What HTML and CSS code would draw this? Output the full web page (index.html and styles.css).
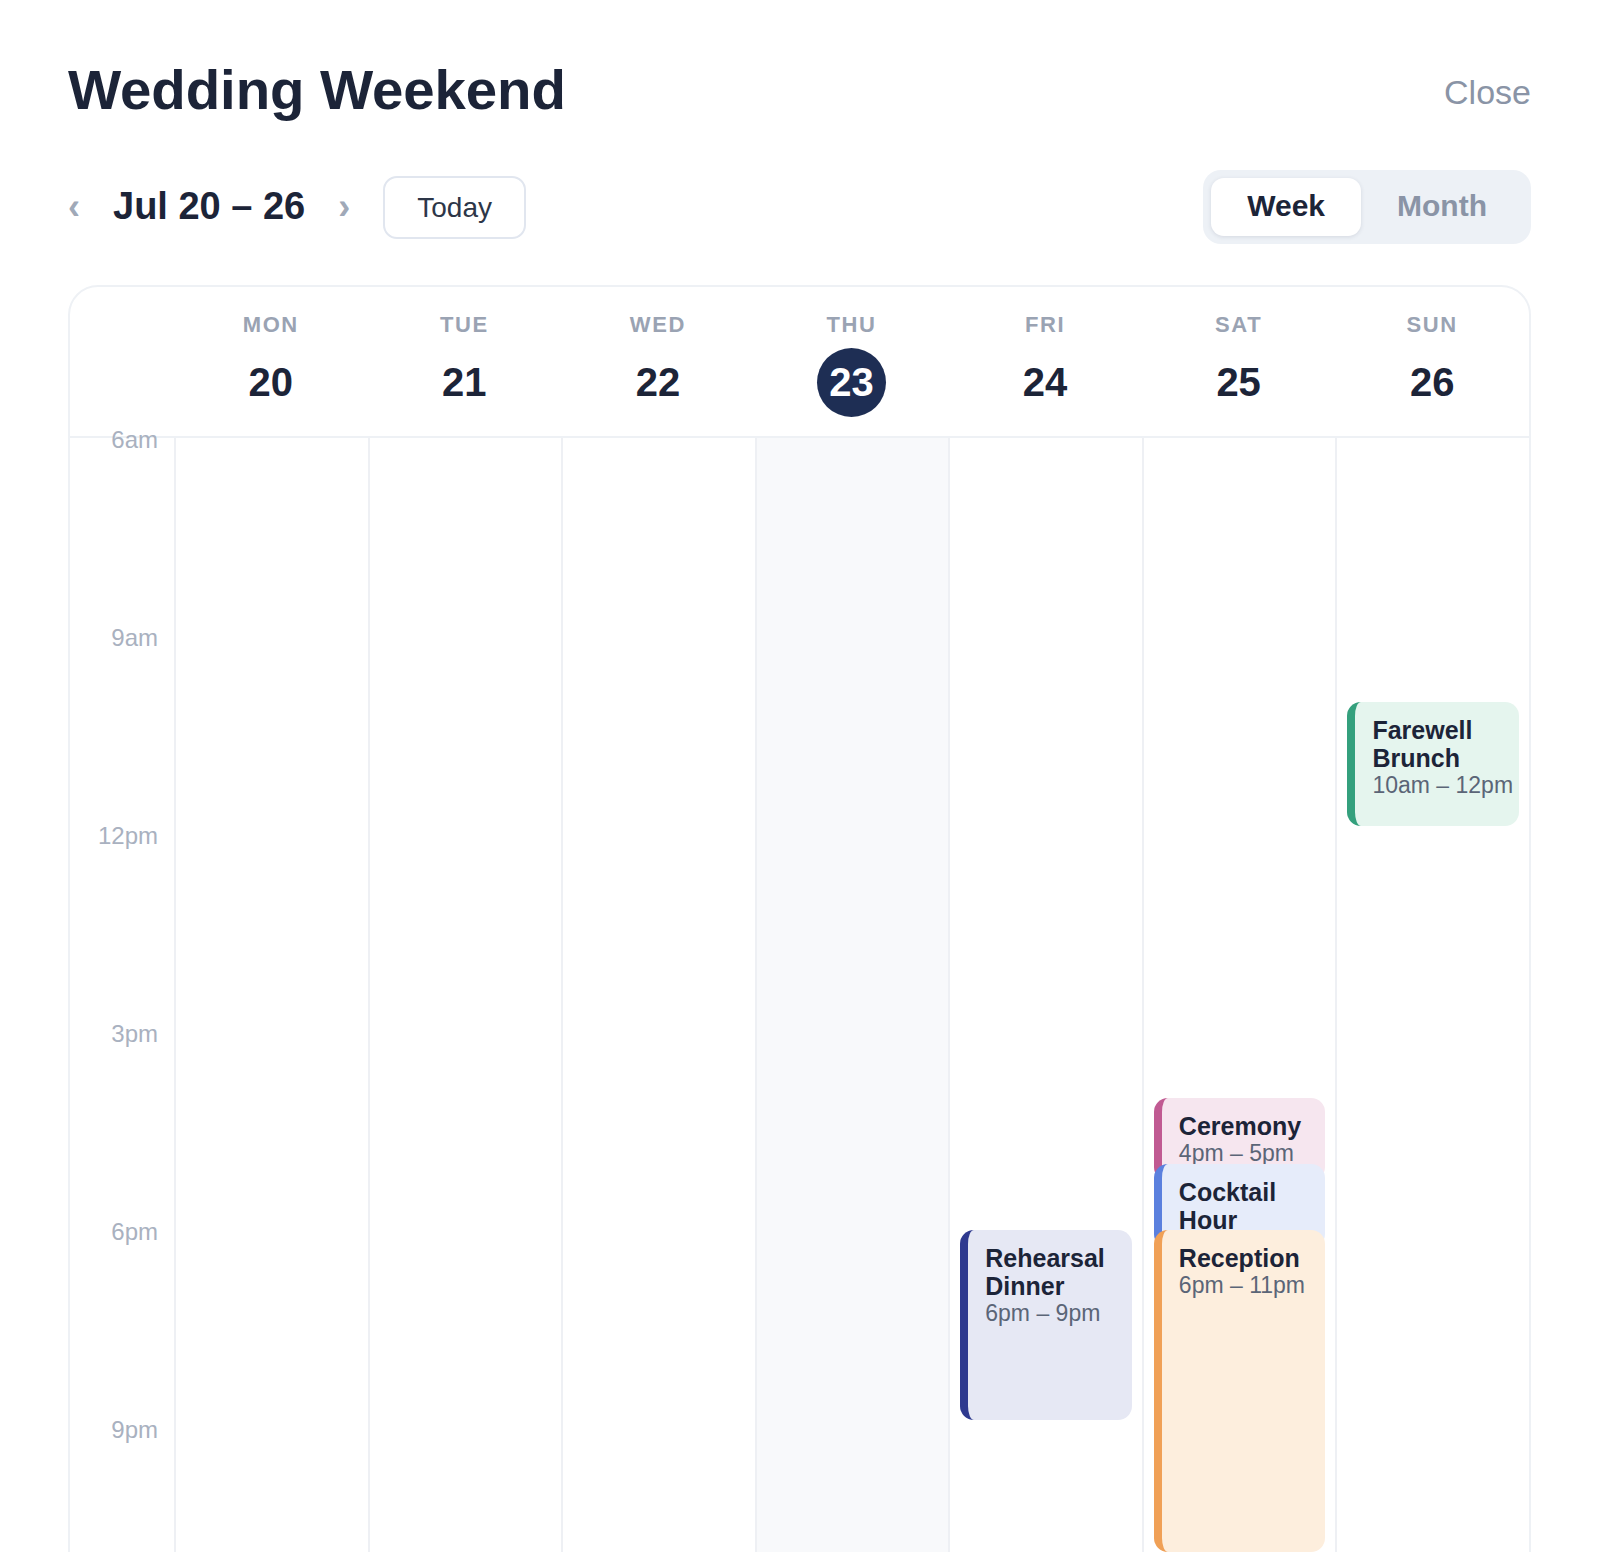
FILE: index.html
```html
<!DOCTYPE html>
<html lang="en">
<head>
<meta charset="utf-8">
<title>Wedding Weekend</title>
<link rel="stylesheet" href="styles.css">
</head>
<body>
<div class="page">
  <header class="topbar">
    <h1 class="title">Wedding Weekend</h1>
    <span class="close">Close</span>
  </header>

  <div class="nav">
    <div class="nav-left">
      <span class="chev">&lsaquo;</span>
      <span class="range">Jul 20 &ndash; 26</span>
      <span class="chev">&rsaquo;</span>
      <span class="today-btn">Today</span>
    </div>
    <div class="segment">
      <span class="seg-btn active">Week</span>
      <span class="seg-btn">Month</span>
    </div>
  </div>

  <section class="card">
    <div class="days-head">
      <div class="gutter-head"></div>
      <div class="day-head"><span class="dname">MON</span><span class="dnum">20</span></div>
      <div class="day-head"><span class="dname">TUE</span><span class="dnum">21</span></div>
      <div class="day-head"><span class="dname">WED</span><span class="dnum">22</span></div>
      <div class="day-head"><span class="dname">THU</span><span class="dnum today">23</span></div>
      <div class="day-head"><span class="dname">FRI</span><span class="dnum">24</span></div>
      <div class="day-head"><span class="dname">SAT</span><span class="dnum">25</span></div>
      <div class="day-head"><span class="dname">SUN</span><span class="dnum">26</span></div>
    </div>

    <div class="grid">
      <div class="gutter">
        <div class="slot"><span class="tlabel">6am</span></div>
        <div class="slot"><span class="tlabel">9am</span></div>
        <div class="slot"><span class="tlabel">12pm</span></div>
        <div class="slot"><span class="tlabel">3pm</span></div>
        <div class="slot"><span class="tlabel">6pm</span></div>
        <div class="slot"><span class="tlabel">9pm</span></div>
      </div>
      <div class="col"></div>
      <div class="col"></div>
      <div class="col"></div>
      <div class="col col-today"></div>
      <div class="col">
        <div class="event ev-navy" style="top:792px;min-height:190px;">
          <div class="ev-title">Rehearsal Dinner</div>
          <div class="ev-time">6pm &ndash; 9pm</div>
        </div>
      </div>
      <div class="col">
        <div class="event ev-pink" style="top:660px;min-height:58px;">
          <div class="ev-title">Ceremony</div>
          <div class="ev-time">4pm &ndash; 5pm</div>
        </div>
        <div class="event ev-blue" style="top:726px;min-height:58px;">
          <div class="ev-title">Cocktail Hour</div>
        </div>
        <div class="event ev-orange" style="top:792px;min-height:322px;">
          <div class="ev-title">Reception</div>
          <div class="ev-time">6pm &ndash; 11pm</div>
        </div>
      </div>
      <div class="col">
        <div class="event ev-green" style="top:264px;min-height:124px;">
          <div class="ev-title">Farewell Brunch</div>
          <div class="ev-time">10am &ndash; 12pm</div>
        </div>
      </div>
    </div>
  </section>
</div>
</body>
</html>
```

FILE: styles.css
```css
html, body {
  margin: 0;
  padding: 0;
  background: #ffffff;
  overflow: hidden;
}

body {
  font-family: "Liberation Sans", Arial, Helvetica, sans-serif;
  color: #1c2438;
}

.page {
  padding: 56px 69px 0 68px;
}

.topbar {
  display: flex;
  justify-content: space-between;
  align-items: center;
}

.title {
  margin: 0;
  font-size: 56.4px;
  line-height: 68px;
  font-weight: 700;
  letter-spacing: -0.1px;
  color: #1c2438;
}

.close {
  font-size: 34px;
  line-height: 1.2;
  color: #8a94a6;
  margin-top: 4px;
}

.nav {
  margin-top: 46px;
  display: flex;
  justify-content: space-between;
  align-items: center;
}

.nav-left {
  display: flex;
  align-items: center;
  gap: 33px;
}

.chev {
  font-size: 36px;
  font-weight: 700;
  line-height: 1;
  color: #a0a9b8;
}

.range {
  font-size: 38px;
  font-weight: 700;
  line-height: 1.2;
  color: #1c2438;
}

.today-btn {
  display: inline-block;
  border: 2px solid #e1e6ef;
  border-radius: 14px;
  padding: 0 32px;
  font-size: 28px;
  line-height: 59px;
  color: #2d3648;
}

.segment {
  display: flex;
  padding: 8px;
  background: #edf1f6;
  border-radius: 18px;
}

.seg-btn {
  padding: 0 36px;
  height: 58px;
  line-height: 56px;
  font-size: 30px;
  font-weight: 700;
  color: #8a94a6;
  border-radius: 13px;
}

.seg-btn.active {
  background: #ffffff;
  color: #1c2438;
  box-shadow: 0 1px 4px rgba(30, 40, 70, 0.12);
}

.card {
  margin-top: 41px;
  border: 2px solid #eef1f5;
  border-radius: 30px;
}

.days-head {
  display: grid;
  grid-template-columns: 104px repeat(7, 1fr);
  padding: 25px 0 19px;
  border-bottom: 2px solid #eef1f5;
}

.day-head {
  display: flex;
  flex-direction: column;
  align-items: center;
  gap: 10px;
}

.dname {
  font-size: 22px;
  line-height: 26px;
  font-weight: 700;
  letter-spacing: 1.6px;
  color: #9aa3b3;
}

.dnum {
  width: 69px;
  height: 69px;
  border-radius: 50%;
  display: flex;
  align-items: center;
  justify-content: center;
  font-size: 40px;
  font-weight: 700;
  color: #1c2438;
}

.dnum.today {
  background: #1e2e54;
  color: #ffffff;
}

.grid {
  display: grid;
  grid-template-columns: 104px repeat(7, 1fr);
  height: 1188px;
}

.gutter {
  display: flex;
  flex-direction: column;
}

.slot {
  height: 198px;
  text-align: right;
  padding-right: 16px;
}

.tlabel {
  display: block;
  font-size: 24px;
  line-height: 28px;
  color: #a9b1c0;
  transform: translateY(-12px);
}

.col {
  position: relative;
  border-left: 2px solid #eef0f4;
}

.col-today {
  background: #f8f9fb;
}

.event {
  position: absolute;
  left: 10px;
  right: 10px;
  box-sizing: border-box;
  border-left: 8px solid;
  border-radius: 14px;
  padding: 14px 4px 14px 17px;
}

.ev-title {
  font-size: 25px;
  line-height: 28px;
  font-weight: 700;
  color: #1c2438;
}

.ev-time {
  font-size: 23px;
  line-height: 27px;
  color: #5b6577;
  white-space: nowrap;
}

.ev-navy {
  background: #e6e8f4;
  border-left-color: #2f3a8f;
}

.ev-pink {
  background: #f6e6ef;
  border-left-color: #c05a92;
}

.ev-blue {
  background: #e6ecfa;
  border-left-color: #5b80de;
}

.ev-orange {
  background: #fdeedd;
  border-left-color: #f0a056;
}

.ev-green {
  background: #e5f5ee;
  border-left-color: #34a07d;
}
```
